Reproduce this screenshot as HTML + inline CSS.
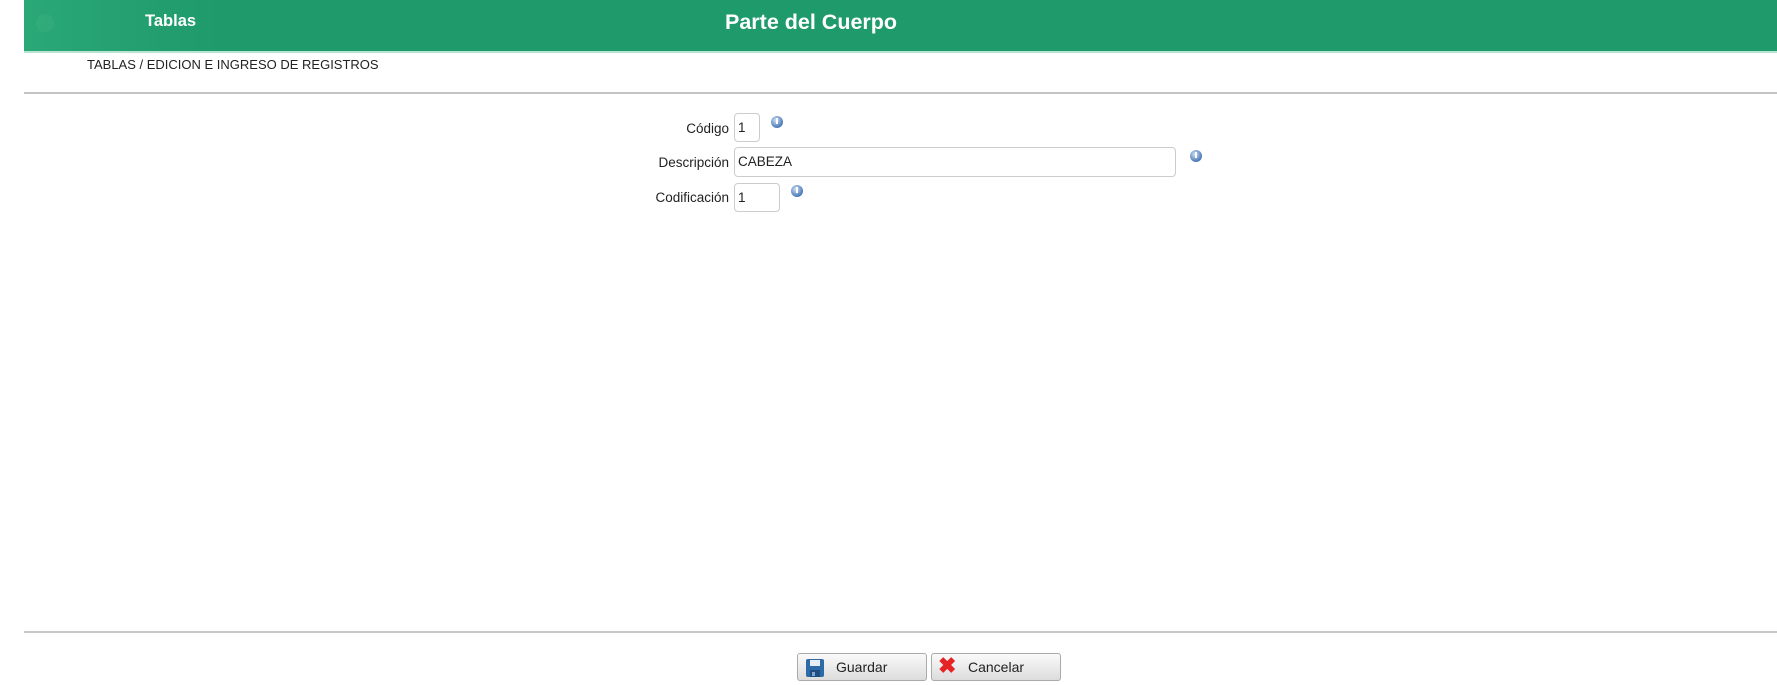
<!DOCTYPE html>
<html><head><meta charset="utf-8"><style>
body{margin:0;width:1777px;height:685px;background:#fff;font-family:"Liberation Sans",sans-serif;position:relative;overflow:hidden}
.hdr{position:absolute;left:24px;top:0;width:1753px;height:51px;background:linear-gradient(90deg,#2aa878 0,#1f9a6a 200px,#1f9a6a 100%);border-bottom:2px solid #b9e3d2}
.a{position:absolute;white-space:nowrap}
.lbl{font-size:13.5px;color:#222;text-align:right;width:120px}
.inp{position:absolute;border:1px solid #ccc;border-radius:4px;background:#fff;font-size:13.5px;color:#222;box-sizing:border-box;padding:7px 3px;line-height:14px}
.ic{position:absolute;width:12px;height:12px;border-radius:50%;background:radial-gradient(circle at 40% 35%,#cfe0f5,#4a78b8 70%)}
.ic:after{content:"";position:absolute;left:5px;top:2px;width:2px;height:6px;background:#fff}
.btn{position:absolute;top:653px;height:28px;width:130px;box-sizing:border-box;border:1px solid #aaa;border-radius:3px;background:linear-gradient(#fafafa,#dcdcdc);font-size:14px;color:#222}
</style></head><body>
<div class="hdr"></div>
<div class="a" style="left:36px;top:14px;width:18px;height:18px;border-radius:50%;background:#37ad7d;opacity:.6"></div>
<div class="a" style="left:145px;top:12px;font-size:16.5px;font-weight:bold;color:#fff">Tablas</div>
<div class="a" style="left:725px;top:10px;font-size:21.5px;font-weight:bold;color:#fff">Parte del Cuerpo</div>
<div class="a" style="left:87px;top:57px;font-size:13px;color:#222">TABLAS / EDICION E INGRESO DE REGISTROS</div>
<div class="a" style="left:24px;top:92px;width:1753px;height:2px;background:#c4c4c4"></div>
<div class="a lbl" style="left:609px;top:121px">Código</div>
<div class="inp" style="left:734px;top:113px;width:26px;height:29px">1</div>
<div class="ic" style="left:771px;top:116px"></div>
<div class="a lbl" style="left:609px;top:155px">Descripción</div>
<div class="inp" style="left:734px;top:147px;width:442px;height:30px">CABEZA</div>
<div class="ic" style="left:1190px;top:150px"></div>
<div class="a lbl" style="left:609px;top:190px">Codificación</div>
<div class="inp" style="left:734px;top:183px;width:46px;height:29px">1</div>
<div class="ic" style="left:791px;top:185px"></div>
<div class="a" style="left:24px;top:631px;width:1753px;height:2px;background:#c8c8c8"></div>
<div class="btn" style="left:797px"><svg style="position:absolute;left:7px;top:4px" width="20" height="20" viewBox="0 0 20 20"><rect x="1" y="1" width="18" height="18" rx="2" fill="#2d6aa8"/><rect x="5" y="2" width="10" height="6" fill="#e8eef6"/><rect x="5" y="12" width="10" height="7" fill="#1d4c80"/><rect x="7" y="14" width="3" height="4" fill="#7aa3d0"/></svg><span class="a" style="left:38px;top:5px">Guardar</span></div>
<div class="btn" style="left:931px"><span class="a" style="left:6px;top:-1px;font-size:22px;font-weight:bold;color:#e52525">✖</span><span class="a" style="left:36px;top:5px">Cancelar</span></div>
</body></html>
